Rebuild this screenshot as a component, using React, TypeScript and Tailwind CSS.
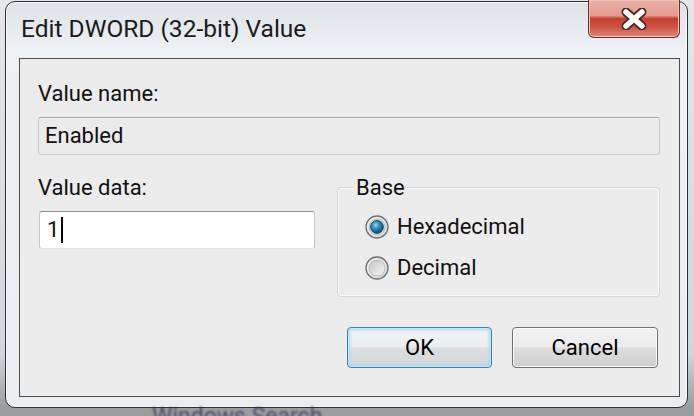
// Edit DWORD (32-bit) Value — classic Windows 7 registry editor dialog.

const FONT = "font-['Roboto','Liberation_Sans',sans-serif]";

function CloseGlyph() {
  return (
    <svg width="28" height="22" viewBox="0 0 28 22">
      <path d="M6 4 L22 18 M22 4 L6 18" stroke="#4a2a26" strokeWidth="9" strokeLinecap="round" />
      <path d="M6 4 L22 18 M22 4 L6 18" stroke="#ffffff" strokeWidth="5.5" strokeLinecap="round" />
    </svg>
  );
}

function Radio({ checked, id }: { checked?: boolean; id: string }) {
  return (
    <svg width="24" height="24" viewBox="0 0 24 24" className="shrink-0">
      <defs>
        <linearGradient id={`ring-${id}`} x1="0" y1="0" x2="1" y2="1">
          <stop offset="0" stopColor="#fbfbfb" />
          <stop offset="1" stopColor="#d4d4d4" />
        </linearGradient>
        <linearGradient id={`well-${id}`} x1="0" y1="0" x2="1" y2="1">
          <stop offset="0" stopColor="#c4c4c4" />
          <stop offset="1" stopColor="#f7f7f7" />
        </linearGradient>
        <radialGradient id={`dot-${id}`} cx="0.4" cy="0.35" r="0.65">
          <stop offset="0" stopColor="#8fdaf5" />
          <stop offset="0.45" stopColor="#2b8dbd" />
          <stop offset="1" stopColor="#0d4a6b" />
        </radialGradient>
      </defs>
      <circle cx="12" cy="12" r="11" fill={`url(#ring-${id})`} stroke="#6f6f6f" strokeWidth="1.3" />
      <circle cx="12" cy="12" r="8" fill={`url(#well-${id})`} stroke="#b0b0b0" strokeWidth="0.8" />
      {checked && <circle cx="12" cy="12" r="6.4" fill={`url(#dot-${id})`} stroke="#1a4d66" strokeWidth="0.9" />}
    </svg>
  );
}

function Button({ label, focused }: { label: string; focused?: boolean }) {
  return (
    <div
      className={
        "h-[41px] flex items-center justify-center rounded-[4px] border text-[22px] leading-none text-black " +
        (focused
          ? "w-[145px] border-[#3c7fb1] shadow-[inset_0_0_0_1px_#bfe9fb,inset_0_0_3px_2px_#9fdcf5] bg-[linear-gradient(180deg,#f3f5f6_0%,#eaeced_48%,#dde0e2_52%,#d2d6d8_100%)]"
          : "w-[146px] border-[#707070] shadow-[inset_0_0_0_1px_#fbfbfb] bg-[linear-gradient(180deg,#f2f2f2_0%,#ebebeb_48%,#dddddd_52%,#cfcfcf_100%)]")
      }
    >
      {label}
    </div>
  );
}

export default function App() {
  return (
    <div className={`w-[694px] h-[416px] overflow-hidden bg-[linear-gradient(180deg,#e4e6e8_0%,#d3d6d8_85%,#9a9c9e_98%)] ${FONT}`}>
      {/* window frame */}
      <div className="ml-[5px] mt-[1px] w-[683px] h-[407px] rounded-[10px] border border-[#2e2e2e] bg-[linear-gradient(180deg,#dde3e7_0%,#eef1f3_12%,#e9edf0_100%)] shadow-[inset_0_0_0_1px_#f7f9fa] flex flex-col pl-[13px] pr-[7px] pb-[10px]">
        {/* title bar */}
        <div className="h-[56px] flex items-start">
          <div className="pl-[2px] pt-[15px] text-[24.5px] leading-none text-[#1b1b1b]">Edit DWORD (32-bit) Value</div>
          <div className="ml-auto -mt-[2px] w-[92px] h-[38px] rounded-b-[6px] border border-t-0 border-[#6d2d25] shadow-[inset_0_0_0_1px_#f1c3bb] bg-[linear-gradient(180deg,#ebb2a9_0%,#e39b90_42%,#c8412f_50%,#cc5240_72%,#df8677_100%)] flex items-center justify-center">
            <CloseGlyph />
          </div>
        </div>

        {/* client area */}
        <div className="flex-1 border border-[#4d4d4d] bg-[#ececec] flex flex-col pl-[18px] pr-[19px] text-[22px] leading-none text-[#111]">
          <div className="mt-[24px]">Value name:</div>
          <div className="mt-[12px] h-[38px] flex items-center pl-[6px] rounded-[3px] border border-[#c6c9cc] border-t-[#9da2a6] bg-[#ebebeb] shadow-[inset_0_1px_0_#f8f8f8]">
            Enabled
          </div>

          <div className="flex">
            <div className="flex flex-col">
              <div className="mt-[22px]">Value data:</div>
              <div className="mt-[12px] ml-[1px] w-[276px] h-[38px] flex items-center pl-[7px] rounded-[3px] border border-[#c0c8cf] border-t-[#8a8f94] border-b-[#e2e7eb] bg-white">
                <span>1</span>
                <span className="ml-[2px] w-[2px] h-[26px] bg-black" />
              </div>
            </div>

            <div className="ml-auto mt-[32px] w-[323px] h-[110px] relative rounded-[4px] border border-[#d0d8dd] shadow-[inset_0_0_0_1px_#fbfbfb] flex flex-col pl-[27px] pt-[27px] gap-[17px]">
              <span className="absolute -top-[9px] left-[16px] px-[2px] bg-[#ececec] leading-[18px]">Base</span>
              <div className="flex items-center gap-[8px]">
                <Radio id="hex" checked />
                <span>Hexadecimal</span>
              </div>
              <div className="flex items-center gap-[8px]">
                <Radio id="dec" />
                <span>Decimal</span>
              </div>
            </div>
          </div>

          <div className="mt-[30px] flex justify-end gap-[20px] pr-[2px]">
            <Button label="OK" focused />
            <Button label="Cancel" />
          </div>
        </div>
      </div>
      <div className="pl-[152px] -mt-[3px] text-[23px] leading-none text-[#1d2a4a] opacity-70 blur-[1px]">Windows Search</div>
    </div>
  );
}
